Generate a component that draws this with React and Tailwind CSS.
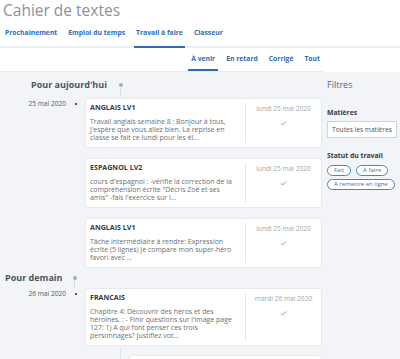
import { Check } from 'lucide-react'

const tabs = ['Prochainement', 'Emploi du temps', 'Travail à faire', 'Classeur']
const subTabs = ['À venir', 'En retard', 'Corrigé', 'Tout']

const groups = [
  {
    title: "Pour aujourd'hui",
    titleClass: 'pl-[31px] h-[26px]',
    dotGap: 'ml-[12px]',
    date: '25 mai 2020',
    items: [
      {
        subject: 'ANGLAIS LV1',
        text: "Travail anglais semaine 8 : Bonjour à tous, j'espère que vous allez bien. La reprise en classe se fait ce lundi pour les él...",
        due: 'lundi 25 mai 2020',
      },
      {
        subject: 'ESPAGNOL LV2',
        text: "cours d'espagnol : -vérifie la correction de la compréhension écrite \"Décris Zoé et ses amis\" -fais l'exercice sur l...",
        due: 'lundi 25 mai 2020',
      },
      {
        subject: 'ANGLAIS LV1',
        text: 'Tâche intermédiaire à rendre: Expression écrite (5 lignes) Je compare mon super-héro favori avec ...',
        due: 'lundi 25 mai 2020',
      },
    ],
  },
  {
    title: 'Pour demain',
    titleClass: 'pl-[5px] h-[20px]',
    dotGap: 'ml-[10px]',
    date: '26 mai 2020',
    items: [
      {
        subject: 'FRANCAIS',
        text: "Chapitre 4: Découvrir des héros et des héroïnes. : - Finir questions sur l'image page 127: 1) A qui font penser ces trois personnages? Justifiez vot...",
        due: 'mardi 26 mai 2020',
      },
    ],
  },
]

function Card({ item }) {
  return (
    <div className="flex bg-white rounded-[3px] border border-[#e6e9ee]">
      <div className="w-[159px] pl-[4px] pr-[7px] pt-[4px] pb-[5px]">
        <p className="text-[7.1px] leading-[9px] font-bold text-[#333a44]">{item.subject}</p>
        <p className="mt-[6px] text-[6.95px] leading-[8px] text-[#6b6f75]">{item.text}</p>
      </div>
      <div className="flex-1 my-[4px] border-l border-[#e4e7eb] flex flex-col items-center pt-[1px]">
        <span className="text-[6.6px] leading-[9px] text-[#a3a8ae]">{item.due}</span>
        <Check className="mt-[7px] w-[7px] h-[7px] text-[#6aa339]" strokeWidth={3} />
      </div>
    </div>
  )
}

export default function App() {
  return (
    <div className="w-[400px] h-[359px] overflow-hidden bg-[#f2f4f7] font-['Open_Sans',sans-serif]">
      <header className="bg-white">
        <h1 className="pl-[3px] text-[15.5px] leading-[21px] text-[#8b9299]">Cahier de textes</h1>
        <nav className="mt-[3px] flex gap-[7px] pl-[3px] border-b-2 border-[#eceff2]">
          {tabs.map(t => (
            <span
              key={t}
              className={`-mb-[2px] h-[24px] pb-[4px] px-[2px] flex items-center border-b-2 text-[6.8px] font-bold text-[#2e6db4] ${t === 'Travail à faire' ? 'border-[#2e6db4]' : 'border-transparent'}`}
            >
              {t}
            </span>
          ))}
        </nav>
        <div className="w-[323px] h-[24px] flex justify-end gap-[5px] border-b border-[#e8ebef]">
          {subTabs.map(t => (
            <span
              key={t}
              className={`px-[3px] h-full pt-[1px] flex items-center border-b-2 text-[6.8px] font-bold text-[#2e6db4] ${t === 'À venir' ? 'border-[#2e6db4]' : 'border-transparent'}`}
            >
              {t}
            </span>
          ))}
        </div>
      </header>

      <main className="flex">
        <div className="w-[322px] shrink-0">
          {groups.map(g => (
            <section key={g.title}>
              <div className={`flex items-center ${g.titleClass}`}>
                <h2 className="text-[9px] font-bold text-[#4d5562]">{g.title}</h2>
                <span className={`relative w-[4px] h-[4px] rounded-full bg-[#a9afb6] ${g.dotGap}`}>
                  <span className="absolute left-[1.5px] top-[5px] h-[7px] border-l border-dotted border-[#c3c8ce]" />
                </span>
              </div>
              <div className="flex">
                <div className="w-[85px] h-[12px] pr-[8px] flex items-center justify-end gap-[9px]">
                  <span className="text-[6.6px] text-[#555b63]">{g.date}</span>
                  <span className="w-[2px] h-[2px] rounded-full bg-[#222]" />
                </div>
                <div className="flex-1 flex flex-col gap-[10px]">
                  {g.items.map((it, i) => (
                    <Card key={i} item={it} />
                  ))}
                </div>
              </div>
            </section>
          ))}
          <div className="flex mt-[2px]">
            <div className="w-[121px] h-[12px] border-r border-[#dfe3e8]" />
            <div className="ml-[8px] mt-[7px] flex-1 h-[10px] bg-white rounded-[3px] border border-[#e6e9ee]" />
          </div>
        </div>

        <aside className="flex-1 pl-[5px] overflow-hidden">
          <div className="h-[26px] flex items-center">
            <h3 className="text-[9px] text-[#5f656c]">Filtres</h3>
          </div>
          <p className="mt-[10px] text-[6.8px] leading-[9px] font-bold text-[#333a44]">Matières</p>
          <div className="mt-[4px] w-[70px] h-[17px] bg-white border border-[#cfd4da] flex items-center pl-[4px]">
            <span className="text-[6.6px] text-[#4d5360] whitespace-nowrap">Toutes les matières</span>
          </div>
          <p className="mt-[13px] text-[6.8px] leading-[9px] font-bold text-[#333a44]">Statut du travail</p>
          <div className="mt-[5px] flex flex-wrap gap-x-[5px] gap-y-[3px] w-[70px]">
            {['Fait', 'À faire', 'À remettre en ligne'].map(p => (
              <span
                key={p}
                className="h-[11px] px-[6px] flex items-center rounded-full border border-[#4a84c6] bg-white text-[6px] text-[#3a74b8] whitespace-nowrap"
              >
                {p}
              </span>
            ))}
          </div>
        </aside>
      </main>
    </div>
  )
}
